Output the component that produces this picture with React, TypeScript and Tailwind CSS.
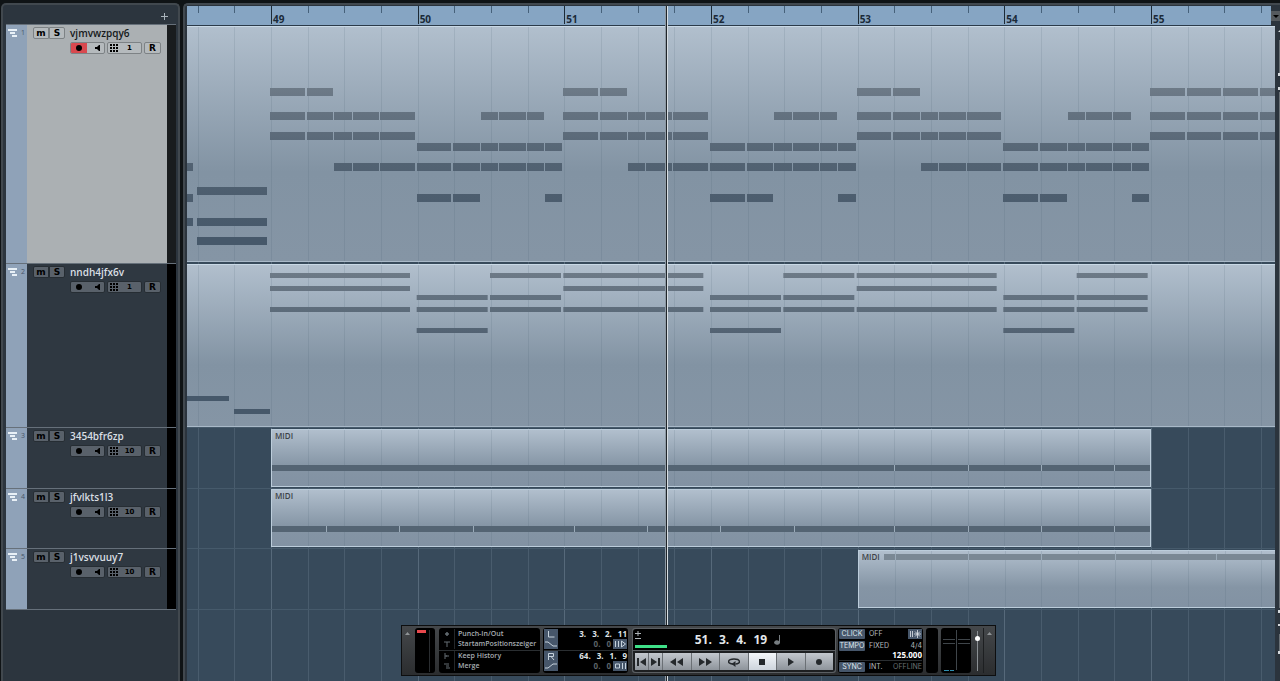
import type { ReactNode } from "react";

const BEAT = 110 / 3;
const ORIGIN = 84; // x of bar 49 on the canvas
const beatX = (beat: number) => ORIGIN + beat * BEAT;
const beats = Array.from({ length: 31 }, (_, i) => i - 2);

type Note = { x: number; w: number; y: number };

// start/end in sixteenths
const STEPS: [number, number][] = [
   [0, 4],
   [4, 7],
   [7, 9],
   [9, 12],
   [12, 14],
   [14, 16],
];
const STEPS_LONG: [number, number][] = [...STEPS.slice(0, 4), [12, 16]];

function phrase(bar: number, y: number, steps: [number, number][]): Note[] {
   return steps.map(([from, to]) => {
      const x = Math.round(beatX(bar * 4 + from / 4)) - 1;
      const end = Math.round(beatX(bar * 4 + to / 4)) - 1;
      return { x, w: end - x - (to - from > 3 ? 2 : 1), y };
   });
}

const chordNotes: Note[] = [
   { x: 0, w: 6, y: 136 },
   { x: 0, w: 6, y: 167 },
   { x: 0, w: 6, y: 191 },
   { x: 10, w: 70, y: 160 },
   { x: 10, w: 70, y: 191 },
   { x: 10, w: 70, y: 210 },
   ...[0, 2, 4].flatMap((bar) => [
      ...phrase(bar, 61, STEPS.slice(0, 2)),
      ...phrase(bar, 85, STEPS_LONG),
      ...phrase(bar, 105, STEPS_LONG),
      ...phrase(bar, 136, STEPS_LONG.slice(2)),
   ]),
   ...[1, 3, 5].flatMap((bar) => [
      ...phrase(bar, 85, STEPS.slice(2, 5)),
      ...phrase(bar, 116, STEPS),
      ...phrase(bar, 136, STEPS),
      ...phrase(bar, 167, [STEPS[0], STEPS[1], STEPS[5]]),
   ]),
   ...[61, 85, 105].flatMap((y) =>
      phrase(6, y, [
         [0, 4],
         [4, 8],
         [8, 12],
         [12, 16],
      ])
   ),
];

const padNotes: Note[] = [
   { x: 0, w: 42, y: 131 },
   { x: 47, w: 36, y: 144 },
   ...[0, 2, 4].flatMap((bar) =>
      [8, 21, 42].map((y) => ({ x: beatX(bar * 4) - 1, w: 140, y }))
   ),
   ...[1, 3, 5].flatMap((bar) => [
      ...[30, 42, 63].map((y) => ({ x: beatX(bar * 4) - 1, w: 71, y })),
      ...[8, 30, 42].map((y) => ({ x: beatX(bar * 4 + 2) - 1, w: 71, y })),
   ]),
];

const tracks = [
   { name: "vjmvwzpqy6", channel: 1, height: "h-[239px]", selected: true },
   { name: "nndh4jfx6v", channel: 1, height: "h-[164px]", selected: false },
   { name: "3454bfr6zp", channel: 10, height: "h-[61px]", selected: false },
   { name: "jfvlkts1l3", channel: 10, height: "h-[60px]", selected: false },
   { name: "j1vsvvuuy7", channel: 10, height: "h-[61px]", selected: false },
];

function TrackRow({ index }: { index: number }) {
   const { name, channel, height, selected } = tracks[index];
   const box = selected
      ? "border border-[#7d8285] bg-[#b5babd] text-black"
      : "border border-[#262d33] bg-[#59616a] text-black";

   return (
      <li className={`flex border-t border-[#66707a] ${height}`}>
         <div className="flex w-[21px] shrink-0 justify-between bg-[#8fa2b8] pt-1 pr-[2px] pl-[2px]">
            <svg className="h-[9px] w-[10px] shrink-0" viewBox="0 0 10 9" fill="#e8f0f6">
               <path d="M0 0h9v2H0zM2 3h5v2H2zM4 6h5v2H4z" />
            </svg>
            <span className="text-[7px] leading-2 text-[#47566a]">{index + 1}</span>
         </div>

         <div
            className={`min-w-0 flex-1 pt-[2px] pl-[6px] ${selected ? "bg-[#abb0b3]" : "bg-[#2f3841]"}`}
         >
            <div className="flex items-center">
               <button
                  aria-label="Mute"
                  className={`h-3 w-4 rounded-l-[2px] font-['DejaVu_Sans'] text-[9px] leading-[9px] font-bold ${box}`}
               >
                  m
               </button>
               <button
                  aria-label="Solo"
                  className={`h-3 w-4 rounded-r-[2px] font-['DejaVu_Sans'] text-[9px] leading-[10px] font-bold ${box}`}
               >
                  S
               </button>
               <span
                  className={`ml-[5px] text-[10px] leading-3 font-semibold ${selected ? "text-[#15181a]" : "text-[#d9dfe4]"}`}
               >
                  {name}
               </span>
            </div>

            <div className="mt-[3px] ml-[37px] flex gap-[2px]">
               <div className={`flex h-3 w-[35px] overflow-hidden rounded-[2px] ${box}`}>
                  <button
                     aria-label="Record enable"
                     className={`flex w-4 items-center justify-center ${selected ? "bg-[#d8494f]" : ""}`}
                  >
                     <svg className="size-[6px]" viewBox="0 0 6 6">
                        <circle cx="3" cy="3" r="3" />
                     </svg>
                  </button>
                  <button aria-label="Monitor" className="flex flex-1 items-center justify-center pl-1">
                     <svg className="h-[6px] w-[5px]" viewBox="0 0 5 6">
                        <path d="M0 2h2l2-2h1v6H4L2 4H0z" />
                     </svg>
                  </button>
               </div>
               <button
                  aria-label="MIDI channel"
                  className={`flex h-3 w-[35px] items-center rounded-[2px] pl-[2px] ${box}`}
               >
                  <svg className="size-2 shrink-0" viewBox="0 0 8 8">
                     <path d="M0 0h2v2H0zM3 0h2v2H3zM6 0h2v2H6zM0 3h2v2H0zM3 3h2v2H3zM6 3h2v2H6zM0 6h2v2H0zM3 6h2v2H3zM6 6h2v2H6z" />
                  </svg>
                  <span className="flex-1 text-center font-['DejaVu_Sans'] text-[7px] leading-[10px] font-bold">
                     {channel}
                  </span>
               </button>
               <button
                  aria-label="Read automation"
                  className={`h-3 w-[17px] rounded-[2px] font-['DejaVu_Sans'] text-[9px] leading-[10px] font-bold ${box}`}
               >
                  R
               </button>
            </div>
         </div>

         <div className={`w-[9px] shrink-0 ${selected ? "bg-[#191c1e]" : "bg-black"}`} />
      </li>
   );
}

function GridLines({ offset = 0, dark = false }: { offset?: number; dark?: boolean }) {
   return (
      <g shapeRendering="crispEdges">
         {beats.map((beat) => (
            <rect
               key={beat}
               x={Math.round(beatX(beat) - offset)}
               width="1"
               height="100%"
               fill={dark ? "#3d5266" : "#a9bccd"}
               opacity={dark ? 0.12 : beat % 4 === 0 ? 0.28 : 0.16}
            />
         ))}
      </g>
   );
}

function WideClip({
   id,
   className,
   notes,
   noteHeight,
   from,
   to,
}: {
   id: string;
   className: string;
   notes: Note[];
   noteHeight: number;
   from: number;
   to: number;
}) {
   return (
      <div
         className={`absolute inset-x-0 border-y border-t-[#c9d9e6] border-b-[#a9b9c8] bg-linear-to-b from-[#b1bfcd] via-[#8293a3] via-62% to-[#8595a5] ${className}`}
      >
         <svg className="block h-full w-full">
            <defs>
               <linearGradient id={id} gradientUnits="userSpaceOnUse" x1="0" x2="0" y1={from} y2={to}>
                  <stop offset="0" stopColor="#6d7a87" />
                  <stop offset="0.5" stopColor="#526272" />
                  <stop offset="1" stopColor="#46586a" />
               </linearGradient>
            </defs>
            <GridLines dark />
            {notes.map((n, i) => (
               <rect key={i} x={n.x} y={n.y} width={n.w} height={noteHeight} fill={`url(#${id})`} />
            ))}
         </svg>
      </div>
   );
}

function MidiClip({
   start,
   end,
   top,
   height,
   strip,
   stripStart = 0,
   color,
   cuts,
}: {
   start: number;
   end: number;
   top: number;
   height: number;
   strip: number;
   stripStart?: number;
   color: string;
   cuts: number[];
}) {
   const left = beatX(start);
   return (
      <div
         className="absolute overflow-hidden border border-[#bccddb] bg-linear-to-b from-[#b1bfcd] via-[#8595a5] via-65% to-[#8292a3]"
         style={{ left, top, width: (end - start) * BEAT, height }}
      >
         <svg className="absolute inset-0 h-full w-full">
            <GridLines offset={left + 1} dark />
            <rect x={stripStart} y={strip} width="100%" height="6" fill={color} />
            {cuts.map((cut) => (
               <rect key={cut} x={Math.round(cut * BEAT) - 1} y={strip} width="1" height="6" fill="#9babb9" />
            ))}
         </svg>
         <span className="relative block pl-[3px] text-[8px] leading-3 font-semibold text-[#3e4348]">MIDI</span>
      </div>
   );
}

function Ruler() {
   return (
      <div className="flex h-5">
         <div className="relative min-w-0 flex-1 overflow-hidden border-b border-[#2b3a49] bg-[#86a5c3]">
            <svg className="block h-full w-full" shapeRendering="crispEdges">
               {beats.map((beat) => (
                  <rect
                     key={beat}
                     x={Math.round(beatX(beat))}
                     width="1"
                     height={beat % 4 === 0 ? 18 : 7}
                     fill={beat % 4 === 0 ? "#1c2a36" : "#46617a"}
                  />
               ))}
            </svg>
            {[49, 50, 51, 52, 53, 54, 55].map((bar) => (
               <span
                  key={bar}
                  className="absolute top-[7px] pl-[2px] text-[10px] leading-3 font-bold text-[#1b2a38]"
                  style={{ left: beatX((bar - 49) * 4) }}
               >
                  {bar}
               </span>
            ))}
         </div>
         <button
            aria-label="Ruler format"
            className="my-[5px] flex w-[9px] items-center justify-center bg-[#555a5e]"
         >
            <svg className="h-[3px] w-[6px]" viewBox="0 0 6 3">
               <path d="M0 0h6L3 3z" />
            </svg>
         </button>
      </div>
   );
}

function Black({ className, children }: { className: string; children?: ReactNode }) {
   return <div className={`h-full shrink-0 rounded-[3px] bg-black ${className}`}>{children}</div>;
}

function Collapse({ label }: { label: string }) {
   return (
      <button aria-label={label} className="flex w-[11px] shrink-0 items-start justify-center pt-1">
         <svg className="h-[3px] w-[5px]" viewBox="0 0 5 3" fill="#8f9396">
            <path d="M0 3h5L2.500 0z" />
         </svg>
      </button>
   );
}

function ModeRow({ icon, children }: { icon: string; children: ReactNode }) {
   return (
      <button className="flex h-[10px] w-full items-center text-left">
         <span className="flex w-[15px] justify-center">
            <svg className="size-[6px]" viewBox="0 0 6 6" fill="none" stroke="#656c72">
               <path d={icon} />
            </svg>
         </span>
         <span className="border-l border-[#23272a] pl-[3px] text-[7px] leading-[10px] font-semibold whitespace-nowrap text-[#a8aeb3]">
            {children}
         </span>
      </button>
   );
}

function LocatorRow({
   values,
   dim,
   label,
   icon,
   end,
}: {
   values: string[];
   dim?: boolean;
   label: string;
   icon: string;
   end?: string;
}) {
   return (
      <div className="flex h-[10px] items-center gap-[2px]">
         <button aria-label={label} className="flex h-[10px] w-[14px] items-center justify-center bg-[#46566a]">
            <svg className="h-2 w-3" viewBox="0 0 12 8" fill="none" stroke="#c6d2dc">
               <path d={icon} />
            </svg>
         </button>
         <span
            className={`flex flex-1 justify-end gap-[6px] text-[8px] leading-[10px] font-bold ${dim ? "text-[#5d6367]" : "text-[#dfe3e6]"}`}
         >
            {values.map((v, i) => (
               <span key={i}>{v}</span>
            ))}
         </span>
         {end && (
            <button aria-label={`${label} enable`} className="flex h-[10px] w-[14px] items-center justify-center bg-[#46566a]">
               <svg className="h-2 w-3" viewBox="0 0 12 8" fill="none" stroke="#c6d2dc">
                  <path d={end} />
               </svg>
            </button>
         )}
      </div>
   );
}

function TransportButton({
   label,
   icon,
   className = "flex-1",
   width = 14,
   active,
}: {
   label: string;
   icon: ReactNode;
   className?: string;
   width?: number;
   active?: boolean;
}) {
   return (
      <button
         aria-label={label}
         className={`flex items-center justify-center border-r border-[#6b7075] bg-linear-to-b last:border-r-0 ${
            active ? "from-[#f4f7fa] to-[#cdd4dc]" : "from-[#c3c8ce] to-[#8e949b]"
         } ${className}`}
      >
         <svg width={width} height="10" viewBox={`0 0 ${width} 10`} fill="#25292c">
            {icon}
         </svg>
      </button>
   );
}

function Tag({ children }: { children: ReactNode }) {
   return (
      <button className="h-[10px] w-[26px] shrink-0 rounded-[1px] bg-[#46566a] text-[7px] leading-[10px] text-[#dfe5ea]">
         {children}
      </button>
   );
}

function Transport() {
   return (
      <div className="absolute bottom-[5px] left-[401px] flex h-[51px] border border-[#0d0e0f] bg-linear-to-b from-[#45484b] to-[#2b2d2f] py-[2px]">
         <Collapse label="Show performance" />
         <Black className="ml-[2px] w-5">
            <div className="flex h-full gap-[3px] px-[2px] pt-[2px]">
               <div className="h-[3px] w-[9px] bg-[#e8484c]" />
               <div className="h-[42px] w-px bg-[#2a2d30]" />
            </div>
         </Black>

         <Black className="ml-1 w-[101px] pt-px">
            <ModeRow icon="M1 3h4M3 1v4M2 2h2v2H2z">Punch-In/Out</ModeRow>
            <ModeRow icon="M0 1h6M3 1v5">StartamPositionszeiger</ModeRow>
            <div className="mt-px border-t border-[#2a2e31]" />
            <ModeRow icon="M1 0v6M2 3h3M2 2v2">Keep History</ModeRow>
            <ModeRow icon="M0 1h5M2 3h3M2 5h4">Merge</ModeRow>
         </Black>

         <Black className="ml-[3px] w-[85px] p-px">
            <LocatorRow label="Left locator" values={["3.", "3.", "2.", "11"]} icon="M3.500 1v6h6" />
            <LocatorRow
               dim
               label="Punch in"
               values={["0.", "0"]}
               icon="M0 2h3l5 4h4"
               end="M1.500 1v6M4.500 1v6M7.500 1v6l4-3z"
            />
            <div className="mt-px border-t border-[#2a2e31]" />
            <LocatorRow
               label="Right locator"
               values={["64.", "3.", "1.", "9"]}
               icon="M3.500 8V1.500h5v3h-5M6 4.500L9 8"
            />
            <LocatorRow
               dim
               label="Punch out"
               values={["0.", "0"]}
               icon="M0 6h3l5-4h4"
               end="M1.500 2h4v4h-4zM8.500 1v6M11.500 1v6"
            />
         </Black>

         <div className="ml-1 w-[204px] shrink-0 rounded-[3px] bg-[#5b5f63] p-px">
            <div className="relative flex h-[21px] items-center justify-center rounded-t-[3px] bg-black pl-2">
               <svg className="absolute top-[2px] left-[2px] h-2 w-[6px]" viewBox="0 0 6 8" stroke="#aeb4b8">
                  <path d="M0 2.500h6M3 0v5M0 7.500h6" />
               </svg>
               <div className="absolute bottom-[2px] left-[2px] h-[3px] w-8 bg-[#3fe088]" />
               <div className="flex items-center gap-[7px] text-[12px] leading-4 font-bold text-[#e3e7ea]">
                  <span>51.</span>
                  <span>3.</span>
                  <span>4.</span>
                  <span>19</span>
                  <svg className="h-[10px] w-[7px]" viewBox="0 0 7 10" fill="#777d81">
                     <path d="M5 0h1v8a3 2 0 1 1-1-2z" />
                  </svg>
               </div>
            </div>
            <div className="mt-px flex h-[21px] rounded-b-[3px] border-2 border-[#1d1f21]">
               <TransportButton
                  label="Previous marker"
                  className="w-[14px]"
                  width={9}
                  icon={<path d="M0 1h2v8H0zM9 1v8L3 5z" />}
               />
               <TransportButton
                  label="Next marker"
                  className="w-[14px]"
                  width={9}
                  icon={<path d="M7 1h2v8H7zM0 1v8l6-4z" />}
               />
               <TransportButton label="Rewind" width={13} icon={<path d="M6 1v8L0 5zM13 1v8L7 5z" />} />
               <TransportButton label="Forward" width={13} icon={<path d="M0 1v8l6-4zM7 1v8l6-4z" />} />
               <TransportButton
                  label="Cycle"
                  width={12}
                  icon={
                     <>
                        <path d="M5 7C-1 7-1 2 6 2s7 5 1.500 5" fill="none" stroke="#25292c" strokeWidth="1.500" />
                        <path d="M7.500 4v6L3.500 7z" />
                     </>
                  }
               />
               <TransportButton label="Stop" width={6} active icon={<path d="M0 2h6v6H0z" />} />
               <TransportButton label="Play" width={6} icon={<path d="M0 1v8l6-4z" />} />
               <TransportButton label="Record" width={6} icon={<circle cx="3" cy="5" r="3" />} />
            </div>
         </div>

         <Black className="ml-[2px] w-[85px] px-px pt-px font-['Inter'] text-[7px] leading-[10px] text-[#b4babf]">
            <div className="flex gap-1">
               <Tag>CLICK</Tag>
               <span>OFF</span>
               <button aria-label="Precount" className="ml-auto flex h-[10px] w-[14px] items-center justify-center bg-[#46566a]">
                  <svg className="h-2 w-3" viewBox="0 0 12 8" stroke="#dfe5ea">
                     <path d="M1.500 1v6M3.500 1v6M8.500 0v8M5 4h7M6 1.500l5 5M11 1.500l-5 5" strokeWidth="0.800" />
                  </svg>
               </button>
            </div>
            <div className="mt-[2px] flex gap-1">
               <Tag>TEMPO</Tag>
               <span>FIXED</span>
               <span className="ml-auto">4/4</span>
            </div>
            <div className="text-right font-['Open_Sans'] text-[8px] leading-2 font-bold text-white">125.000</div>
            <div className="mt-px flex gap-1 border-t border-[#2a2e31] pt-px">
               <Tag>SYNC</Tag>
               <span>INT.</span>
               <span className="ml-auto text-[#6a7074]">OFFLINE</span>
            </div>
         </Black>

         <Black className="ml-[3px] w-3" />
         <Black className="ml-[3px] w-[30px]">
            <svg className="block h-full w-full" viewBox="0 0 30 45" fill="none" stroke="#3f454a" shapeRendering="crispEdges">
               <path d="M15.500 2v40M2 11.500h12M17 11.500h12M2 15.500h12M17 15.500h12" />
               <path d="M3 42.500h5M9 42.500h4" stroke="#2f8fb0" />
            </svg>
         </Black>
         <label className="flex w-[13px] shrink-0 items-center justify-center border-r border-[#1d1f21]">
            <input
               type="range"
               aria-label="Output level"
               defaultValue={83}
               className="h-10 w-px appearance-none bg-[#8b9094] [direction:rtl] [writing-mode:vertical-lr] [&::-webkit-slider-thumb]:size-[5px] [&::-webkit-slider-thumb]:appearance-none [&::-webkit-slider-thumb]:rounded-full [&::-webkit-slider-thumb]:bg-white"
            />
         </label>
         <Collapse label="Show output" />
      </div>
   );
}

export default function App() {
   return (
      <div className="relative flex h-screen gap-[3px] overflow-hidden bg-[#0f1315] pt-[3px] pl-px font-['Open_Sans','Noto_Sans',sans-serif]">
         {/* Track list */}
         <aside className="w-[179px] shrink-0 rounded-t-[5px] border-2 border-b-0 border-[#41484e] bg-[#2c353e] pr-[2px]">
            <div className="flex h-[19px] items-center justify-end pt-1 pr-2">
               <button aria-label="Add track">
                  <svg className="size-[7px]" viewBox="0 0 7 7" stroke="#a9b3bb">
                     <path d="M0 3.500h7M3.500 0v7" />
                  </svg>
               </button>
            </div>
            <ul className="ml-[3px] border-b border-[#66707a]">
               {tracks.map((t, i) => (
                  <TrackRow key={t.name} index={i} />
               ))}
            </ul>
         </aside>

         {/* Arrangement */}
         <main className="relative flex min-w-0 flex-1 flex-col rounded-tl-[5px] border-t-2 border-l-2 border-[#41484e] bg-[#2b343d] pt-px pl-[2px]">
            <Ruler />
            <div className="flex min-h-0 flex-1">
               <div className="relative min-w-0 flex-1 overflow-hidden bg-[#374a5b]">
                  <svg className="absolute inset-0 h-full w-full">
                     <GridLines />
                     <path d="M0 401.500h2000M0 462.500h2000M0 522.500h2000M0 583.500h2000" stroke="#465a6b" />
                  </svg>
                  <WideClip id="chords" className="top-0 h-[236px]" notes={chordNotes} noteHeight={8} from={61} to={210} />
                  <WideClip id="pads" className="top-[238px] h-[163px]" notes={padNotes} noteHeight={5} from={8} to={131} />
                  <MidiClip start={0} end={24} top={403} height={58} strip={35} color="#546473" cuts={[17, 19, 21, 23]} />
                  <MidiClip
                     start={0}
                     end={24}
                     top={463}
                     height={58}
                     strip={36}
                     color="#546473"
                     cuts={[1.5, 3.5, 5.5, 8.25, 10.25, 12.25, 14.25, 17, 19, 21, 23]}
                  />
                  <MidiClip
                     start={16}
                     end={32}
                     top={524}
                     height={58}
                     strip={3}
                     stripStart={25}
                     color="#7a8894"
                     cuts={[1, 3, 5, 7, 9.75]}
                  />
               </div>
               <svg className="h-full w-[5px] shrink-0" fill="#d5dade">
                  <path d="M3 6l2-2v2zM3 47h2v3H3zM3 61h2v3H3zM3 584h2v3H3zM3 598h2v2H3zM3 625h2v3H3z" />
                  <path d="M4 14h1v33H4zM4 66h1v516H4zM4 608h1v17H4z" fill="#6a7177" />
               </svg>
            </div>
            <div className="absolute top-px bottom-0 left-[481px] w-[2px] border-l border-[#20262b] bg-[#d9dfe3] shadow-[-1px_0_0_#8d99a4]" />
         </main>

         <Transport />
      </div>
   );
}
